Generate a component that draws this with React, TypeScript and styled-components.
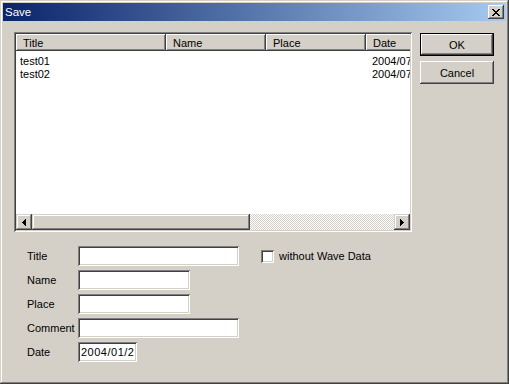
import React from "react";
import styled, { createGlobalStyle } from "styled-components";

const GlobalStyle = createGlobalStyle`
  html, body {
    margin: 0;
    padding: 0;
    background: #d4d0c8;
  }
  * {
    box-sizing: border-box;
  }
`;

const face = "#d4d0c8";
const shadow = "#808080";
const darkShadow = "#404040";
const font = `"Liberation Sans", Arial, sans-serif`;

const raised = `
  box-shadow: inset -1px -1px ${darkShadow}, inset 1px 1px #fff,
    inset -2px -2px ${shadow}, inset 2px 2px ${face};
`;

const sunken = `
  box-shadow: inset 1px 1px ${shadow}, inset -1px -1px #fff,
    inset 2px 2px ${darkShadow}, inset -2px -2px ${face};
`;

const Window = styled.div`
  width: 509px;
  height: 384px;
  padding: 3px;
  background: ${face};
  box-shadow: inset -1px -1px ${darkShadow}, inset 1px 1px ${face},
    inset -2px -2px ${shadow}, inset 2px 2px #fff;
  display: flex;
  flex-direction: column;
  font-family: ${font};
  font-size: 11px;
  color: #000;
`;

const TitleBar = styled.div`
  height: 18px;
  display: flex;
  align-items: center;
  justify-content: space-between;
  padding: 0 2px 0 2px;
  background: linear-gradient(to right, #0a246a, #a6caf0);
`;

const TitleText = styled.span`
  color: #fff;
  font-size: 11.5px;
  line-height: 18px;
`;

const CloseButton = styled.div`
  width: 16px;
  height: 14px;
  background: ${face};
  ${raised}
  display: flex;
  align-items: center;
  justify-content: center;
`;

const Body = styled.div`
  padding: 11px 11px 0 11px;
  display: flex;
  flex-direction: column;
`;

const TopRow = styled.div`
  display: flex;
  gap: 8px;
`;

const ListView = styled.div`
  width: 398px;
  height: 200px;
  padding: 2px;
  background: #fff;
  ${sunken}
  display: flex;
  flex-direction: column;
  overflow: hidden;
`;

const Header = styled.div`
  display: flex;
  height: 17px;
  flex-shrink: 0;
  overflow: hidden;
`;

const HeaderCell = styled.div<{ $width: number }>`
  flex: 0 0 ${(p) => p.$width}px;
  height: 17px;
  padding: 2px 0 0 7px;
  line-height: 14px;
  background: ${face};
  box-shadow: inset -1px -1px ${darkShadow}, inset 1px 1px #fff,
    inset -2px -2px ${shadow};
  white-space: nowrap;
  overflow: hidden;
`;

const Rows = styled.div`
  flex: 1;
  padding-top: 4px;
  overflow: hidden;
`;

const Row = styled.div`
  display: flex;
  height: 13px;
  line-height: 13px;
  white-space: nowrap;
`;

const Cell = styled.div<{ $width: number; $pad: number }>`
  flex: 0 0 ${(p) => p.$width}px;
  padding-left: ${(p) => p.$pad}px;
  overflow: hidden;
`;

const ScrollBar = styled.div`
  display: flex;
  height: 16px;
  flex-shrink: 0;
`;

const ScrollButton = styled.div`
  width: 16px;
  height: 16px;
  background: ${face};
  box-shadow: inset -1px -1px ${darkShadow}, inset 1px 1px ${face},
    inset -2px -2px ${shadow}, inset 2px 2px #fff;
  display: flex;
  align-items: center;
  justify-content: center;
`;

const ScrollThumb = styled.div<{ $width: number }>`
  width: ${(p) => p.$width}px;
  height: 16px;
  background: ${face};
  box-shadow: inset -1px -1px ${darkShadow}, inset 1px 1px ${face},
    inset -2px -2px ${shadow}, inset 2px 2px #fff;
`;

const ScrollTrack = styled.div`
  flex: 1;
  height: 16px;
  background-color: ${face};
  background-image: conic-gradient(#fff 25%, ${face} 0 50%, #fff 0 75%, ${face} 0);
  background-size: 2px 2px;
`;

const ButtonColumn = styled.div`
  display: flex;
  flex-direction: column;
  gap: 5px;
  padding-top: 1px;
`;

const PushButton = styled.div<{ $default?: boolean }>`
  width: 74px;
  height: 23px;
  background: ${face};
  display: flex;
  align-items: center;
  justify-content: center;
  ${(p) =>
    p.$default
      ? `box-shadow: inset 0 0 0 1px #000, inset -2px -2px ${darkShadow}, inset 2px 2px #fff,
    inset -3px -3px ${shadow};`
      : raised}
`;

const Form = styled.div`
  margin-top: 14px;
  padding-left: 13px;
  display: flex;
  flex-direction: column;
  gap: 4px;
`;

const FormRow = styled.div`
  display: flex;
  align-items: center;
  height: 20px;
`;

const FieldLabel = styled.div`
  width: 51px;
  white-space: nowrap;
`;

const TextField = styled.div<{ $width: number }>`
  width: ${(p) => p.$width}px;
  height: 20px;
  background: #fff;
  ${sunken}
  padding: 0 0 0 3px;
  line-height: 20px;
  letter-spacing: 0.5px;
  white-space: nowrap;
  overflow: hidden;
`;

const CheckOption = styled.div`
  display: flex;
  align-items: center;
  gap: 5px;
  margin-left: 22px;
`;

const CheckBox = styled.div`
  width: 13px;
  height: 13px;
  background: #fff;
  ${sunken}
`;

const columns = [
  { label: "Title", width: 150 },
  { label: "Name", width: 100 },
  { label: "Place", width: 100 },
  { label: "Date", width: 100 },
];

const items = [
  ["test01", "", "", "2004/07/15"],
  ["test02", "", "", "2004/07/15"],
];

const cellPad = [4, 6, 6, 6];

const CloseGlyph = () => (
  <svg width="8" height="7" viewBox="0 0 8 7" shapeRendering="crispEdges">
    <path
      d="M0 0h2v1h1v1h2v-1h1v-1h2v1h-1v1h-1v1h-1v1h1v1h1v1h1v1h-2v-1h-1v-1h-2v1h-1v1h-2v-1h1v-1h1v-1h1v-1h-1v-1h-1v-1h-1z"
      fill="#000"
    />
  </svg>
);

const LeftArrow = () => (
  <svg width="4" height="7" viewBox="0 0 4 7" shapeRendering="crispEdges">
    <path d="M3 0h1v7h-1v-1h-1v-1h-1v-1h-1v-1h1v-1h1v-1h1z" fill="#000" />
  </svg>
);

const RightArrow = () => (
  <svg width="4" height="7" viewBox="0 0 4 7" shapeRendering="crispEdges">
    <path d="M0 0h1v1h1v1h1v1h1v1h-1v1h-1v1h-1v1h-1z" fill="#000" />
  </svg>
);

export default function App() {
  return (
    <>
      <GlobalStyle />
      <Window>
        <TitleBar>
          <TitleText>Save</TitleText>
          <CloseButton>
            <CloseGlyph />
          </CloseButton>
        </TitleBar>
        <Body>
          <TopRow>
            <ListView>
              <Header>
                {columns.map((c) => (
                  <HeaderCell key={c.label} $width={c.width}>
                    {c.label}
                  </HeaderCell>
                ))}
              </Header>
              <Rows>
                {items.map((row, i) => (
                  <Row key={i}>
                    {row.map((v, j) => (
                      <Cell key={j} $width={columns[j].width} $pad={cellPad[j]}>
                        {v}
                      </Cell>
                    ))}
                  </Row>
                ))}
              </Rows>
              <ScrollBar>
                <ScrollButton>
                  <LeftArrow />
                </ScrollButton>
                <ScrollThumb $width={218} />
                <ScrollTrack />
                <ScrollButton>
                  <RightArrow />
                </ScrollButton>
              </ScrollBar>
            </ListView>
            <ButtonColumn>
              <PushButton $default>OK</PushButton>
              <PushButton>Cancel</PushButton>
            </ButtonColumn>
          </TopRow>
          <Form>
            <FormRow>
              <FieldLabel>Title</FieldLabel>
              <TextField $width={161} />
              <CheckOption>
                <CheckBox />
                <span>without Wave Data</span>
              </CheckOption>
            </FormRow>
            <FormRow>
              <FieldLabel>Name</FieldLabel>
              <TextField $width={112} />
            </FormRow>
            <FormRow>
              <FieldLabel>Place</FieldLabel>
              <TextField $width={112} />
            </FormRow>
            <FormRow>
              <FieldLabel>Comment</FieldLabel>
              <TextField $width={161} />
            </FormRow>
            <FormRow>
              <FieldLabel>Date</FieldLabel>
              <TextField $width={59}>2004/01/2</TextField>
            </FormRow>
          </Form>
        </Body>
      </Window>
    </>
  );
}
